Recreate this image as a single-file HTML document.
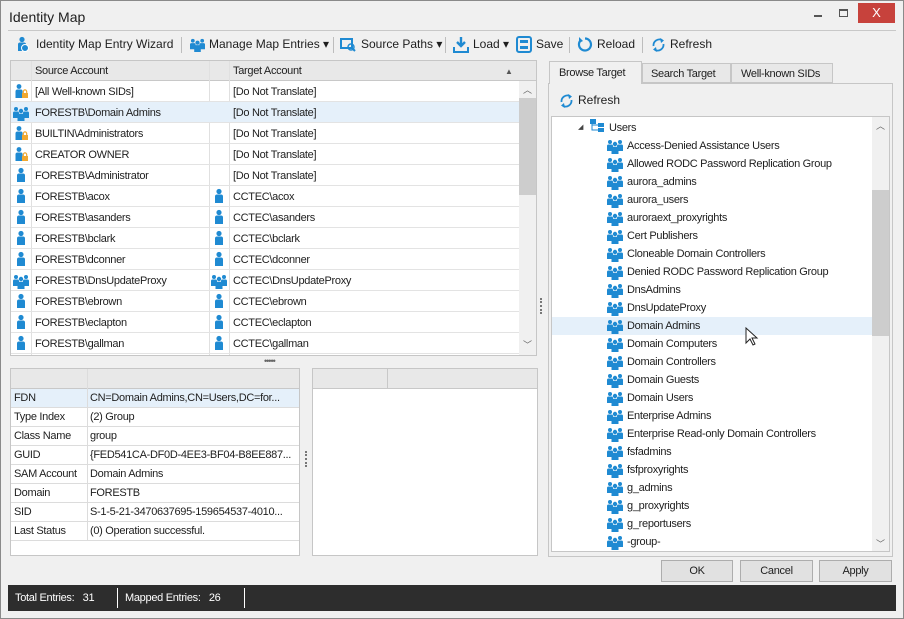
<!DOCTYPE html>
<html><head><meta charset="utf-8"><style>
*{box-sizing:border-box;margin:0;padding:0}
body{width:904px;height:619px;overflow:hidden;background:#fff;font-family:"Liberation Sans",sans-serif;font-size:12px;color:#1e1e1e;position:relative}
.a{position:absolute}
.win{left:0;top:0;width:904px;height:619px;background:#f0f0f0;border:1px solid #8a8a8a}
.t{white-space:nowrap;line-height:14px}
.sm{font-size:11px;letter-spacing:-0.3px}
.row{position:absolute;height:21px;border-bottom:1px solid #e3e3e3;width:508px;left:0}
.hl{background:#e5f0fa}
svg.i{position:absolute}
.tb{position:absolute;top:35px;height:18px;line-height:18px;white-space:nowrap}
.sep{position:absolute;top:37px;width:1px;height:16px;background:#bdbdbd}
.pr{position:absolute;left:0;width:288px;height:19px;border-bottom:1px solid #dcdcdc;line-height:18px;white-space:nowrap;overflow:hidden}
.pr span{position:absolute;left:3px}
.pr b{font-weight:normal;position:absolute;left:79px}
.tr{position:absolute;left:54px;height:18px;line-height:18px;white-space:nowrap}
.btn{position:absolute;top:560px;height:22px;border:1px solid #adadad;background:#e1e1e1;text-align:center;line-height:20px}
</style></head><body>
<svg width="0" height="0" style="position:absolute">
<defs>
<symbol id="p" viewBox="0 0 16 16"><circle cx="8" cy="3.5" r="2.6" fill="#1f8ad2"/><path d="M4 15V8.5Q4 6.5 6 6.5H10Q12 6.5 12 8.5V15Z" fill="#1f8ad2"/></symbol>
<symbol id="pl" viewBox="0 0 16 16"><circle cx="6" cy="3.5" r="2.4" fill="#1f8ad2"/><path d="M2.5 15V8.5Q2.5 6.5 4.5 6.5H8Q9.5 6.5 9.5 8V15Z" fill="#1f8ad2"/><rect x="9" y="10" width="6" height="5" fill="#f0a830"/><path d="M10.3 10V8.6A1.7 1.7 0 0 1 13.7 8.6V10" stroke="#f0a830" stroke-width="1.2" fill="none"/></symbol>
<symbol id="g" viewBox="0 0 18 16"><circle cx="4" cy="4" r="2" fill="#1f8ad2"/><circle cx="14" cy="4" r="2" fill="#1f8ad2"/><path d="M1 13V8Q1 6.5 2.5 6.5H5.5Q7 6.5 7 8V13ZM11 13V8Q11 6.5 12.5 6.5H15.5Q17 6.5 17 8V13Z" fill="#1f8ad2"/><circle cx="9" cy="6" r="2.2" fill="#1f8ad2"/><path d="M5.5 16V10.5Q5.5 8.7 7.3 8.7H10.7Q12.5 8.7 12.5 10.5V16Z" fill="#1f8ad2"/></symbol>
</defs></svg>
<div class="a win"></div>
<div class="a t" style="left:9px;top:8px;font-size:14px;line-height:18px">Identity Map</div>
<div class="a" style="left:814px;top:15px;width:8px;height:2px;background:#555"></div>
<div class="a" style="left:839px;top:9px;width:9px;height:8px;border:1px solid #555;border-top-width:2px"></div>
<div class="a" style="left:858px;top:3px;width:37px;height:20px;background:#c7423c;color:#fff;text-align:center;line-height:20px;font-size:13px">X</div>
<div class="a" style="left:8px;top:30px;width:888px;height:1px;background:#c8c8c8"></div>
<!-- toolbar -->
<svg class="i" style="left:14px;top:35px" width="16" height="18"><use href="#p"/><circle cx="11" cy="13" r="3.5" fill="#1f8ad2" stroke="#fff"/></svg>
<div class="tb" style="left:36px">Identity Map Entry Wizard</div>
<div class="sep" style="left:181px"></div>
<svg class="i" style="left:189px;top:37px" width="17" height="15"><use href="#g"/></svg>
<div class="tb" style="left:209px">Manage Map Entries ▾</div>
<div class="sep" style="left:333px"></div>
<svg class="i" style="left:340px;top:37px" width="16" height="15"><rect x="1" y="2" width="11" height="9" fill="none" stroke="#1f8ad2" stroke-width="2"/><circle cx="11" cy="10" r="3" fill="none" stroke="#1f8ad2" stroke-width="1.5"/><path d="M13 12L15 14" stroke="#1f8ad2" stroke-width="2"/></svg>
<div class="tb" style="left:361px">Source Paths ▾</div>
<div class="sep" style="left:445px"></div>
<svg class="i" style="left:453px;top:36px" width="16" height="17"><path d="M8 1V10M4 6L8 10L12 6" stroke="#1f8ad2" stroke-width="2.4" fill="none"/><path d="M1 11V16H15V11" stroke="#1f8ad2" stroke-width="2" fill="none"/></svg>
<div class="tb" style="left:473px">Load ▾</div>
<svg class="i" style="left:516px;top:36px" width="16" height="17"><rect x="1" y="1" width="14" height="15" rx="2" fill="none" stroke="#1f8ad2" stroke-width="2"/><rect x="4" y="4" width="8" height="3" fill="#1f8ad2"/><rect x="4" y="10" width="8" height="3" fill="#1f8ad2"/></svg>
<div class="tb" style="left:536px">Save</div>
<div class="sep" style="left:569px"></div>
<svg class="i" style="left:577px;top:36px" width="16" height="17"><path d="M4 4A6 6 0 1 0 8 2.5" stroke="#1f8ad2" stroke-width="2.2" fill="none"/><path d="M2 1L6 5L2 7Z" fill="#1f8ad2"/></svg>
<div class="tb" style="left:597px">Reload</div>
<div class="sep" style="left:642px"></div>
<svg class="i" style="left:651px;top:36px" width="15" height="17"><path d="M11 4A6 6 0 0 0 2.5 10M4 14A6 6 0 0 0 12.5 8" stroke="#1f8ad2" stroke-width="1.8" fill="none"/><path d="M9 2L13 4.5L10 7Z M6 16L2 13.5L5 11Z" fill="#1f8ad2"/></svg>
<div class="tb" style="left:670px">Refresh</div>

<!-- main grid -->
<div class="a sm" style="left:10px;top:60px;width:527px;height:296px;border:1px solid #c6c6c6;background:#fff;overflow:hidden">
 <div class="a" style="left:0;top:0;width:525px;height:20px;background:#e8e8e8;border-bottom:1px solid #c8c8c8"></div>
 <div class="a" style="left:20px;top:0;width:1px;height:296px;background:#e0e0e0"></div>
 <div class="a" style="left:198px;top:0;width:1px;height:296px;background:#e0e0e0"></div>
 <div class="a" style="left:218px;top:0;width:1px;height:296px;background:#e0e0e0"></div>
 <div class="a t" style="left:24px;top:3px">Source Account</div>
 <div class="a t" style="left:222px;top:3px">Target Account</div>
 <div class="a" style="left:494px;top:6px;font-size:8px;color:#555">▲</div>
 <div class="a" style="left:508px;top:20px;width:17px;height:276px;background:#f0f0f0"></div>
 <div class="a" style="left:508px;top:37px;width:17px;height:97px;background:#cdcdcd"></div>
 <div class="a" style="left:512px;top:22px;font-size:9px;color:#666">︿</div>
 <div class="a" style="left:512px;top:277px;font-size:9px;color:#666">﹀</div>
 <div class="a" style="left:0;top:20px;width:508px;height:276px">
  <div class="row" style="top:0"><svg class="i" style="left:2px;top:2px" width="16" height="16"><use href="#pl"/></svg><span class="a t" style="left:24px;top:4px">[All Well-known SIDs]</span><span class="a t" style="left:222px;top:4px">[Do Not Translate]</span></div>
  <div class="row hl" style="top:21px"><svg class="i" style="left:1px;top:3px" width="18" height="16"><use href="#g"/></svg><span class="a t" style="left:24px;top:4px">FORESTB\Domain Admins</span><span class="a t" style="left:222px;top:4px">[Do Not Translate]</span></div>
  <div class="row" style="top:42px"><svg class="i" style="left:2px;top:2px" width="16" height="16"><use href="#pl"/></svg><span class="a t" style="left:24px;top:4px">BUILTIN\Administrators</span><span class="a t" style="left:222px;top:4px">[Do Not Translate]</span></div>
  <div class="row" style="top:63px"><svg class="i" style="left:2px;top:2px" width="16" height="16"><use href="#pl"/></svg><span class="a t" style="left:24px;top:4px">CREATOR OWNER</span><span class="a t" style="left:222px;top:4px">[Do Not Translate]</span></div>
  <div class="row" style="top:84px"><svg class="i" style="left:2px;top:2px" width="16" height="16"><use href="#p"/></svg><span class="a t" style="left:24px;top:4px">FORESTB\Administrator</span><span class="a t" style="left:222px;top:4px">[Do Not Translate]</span></div>
  <div class="row" style="top:105px"><svg class="i" style="left:2px;top:2px" width="16" height="16"><use href="#p"/></svg><span class="a t" style="left:24px;top:4px">FORESTB\acox</span><svg class="i" style="left:200px;top:2px" width="16" height="16"><use href="#p"/></svg><span class="a t" style="left:222px;top:4px">CCTEC\acox</span></div>
  <div class="row" style="top:126px"><svg class="i" style="left:2px;top:2px" width="16" height="16"><use href="#p"/></svg><span class="a t" style="left:24px;top:4px">FORESTB\asanders</span><svg class="i" style="left:200px;top:2px" width="16" height="16"><use href="#p"/></svg><span class="a t" style="left:222px;top:4px">CCTEC\asanders</span></div>
  <div class="row" style="top:147px"><svg class="i" style="left:2px;top:2px" width="16" height="16"><use href="#p"/></svg><span class="a t" style="left:24px;top:4px">FORESTB\bclark</span><svg class="i" style="left:200px;top:2px" width="16" height="16"><use href="#p"/></svg><span class="a t" style="left:222px;top:4px">CCTEC\bclark</span></div>
  <div class="row" style="top:168px"><svg class="i" style="left:2px;top:2px" width="16" height="16"><use href="#p"/></svg><span class="a t" style="left:24px;top:4px">FORESTB\dconner</span><svg class="i" style="left:200px;top:2px" width="16" height="16"><use href="#p"/></svg><span class="a t" style="left:222px;top:4px">CCTEC\dconner</span></div>
  <div class="row" style="top:189px"><svg class="i" style="left:1px;top:3px" width="18" height="16"><use href="#g"/></svg><span class="a t" style="left:24px;top:4px">FORESTB\DnsUpdateProxy</span><svg class="i" style="left:199px;top:3px" width="18" height="16"><use href="#g"/></svg><span class="a t" style="left:222px;top:4px">CCTEC\DnsUpdateProxy</span></div>
  <div class="row" style="top:210px"><svg class="i" style="left:2px;top:2px" width="16" height="16"><use href="#p"/></svg><span class="a t" style="left:24px;top:4px">FORESTB\ebrown</span><svg class="i" style="left:200px;top:2px" width="16" height="16"><use href="#p"/></svg><span class="a t" style="left:222px;top:4px">CCTEC\ebrown</span></div>
  <div class="row" style="top:231px"><svg class="i" style="left:2px;top:2px" width="16" height="16"><use href="#p"/></svg><span class="a t" style="left:24px;top:4px">FORESTB\eclapton</span><svg class="i" style="left:200px;top:2px" width="16" height="16"><use href="#p"/></svg><span class="a t" style="left:222px;top:4px">CCTEC\eclapton</span></div>
  <div class="row" style="top:252px"><svg class="i" style="left:2px;top:2px" width="16" height="16"><use href="#p"/></svg><span class="a t" style="left:24px;top:4px">FORESTB\gallman</span><svg class="i" style="left:200px;top:2px" width="16" height="16"><use href="#p"/></svg><span class="a t" style="left:222px;top:4px">CCTEC\gallman</span></div>
 </div>
</div>
<div class="a" style="left:264px;top:356px;font-size:9px;color:#666;letter-spacing:-1px">•••••</div>

<!-- property grid -->
<div class="a sm" style="left:10px;top:368px;width:290px;height:188px;border:1px solid #c6c6c6;background:#fff">
 <div class="a" style="left:0;top:0;width:288px;height:20px;background:#e8e8e8;border-bottom:1px solid #c8c8c8"></div>
 <div class="a" style="left:76px;top:0;width:1px;height:172px;background:#dcdcdc;z-index:2"></div>
 <div class="a" style="left:0;top:20px;width:288px">
  <div class="pr hl" style="top:0"><span>FDN</span><b>CN=Domain Admins,CN=Users,DC=for...</b></div>
  <div class="pr" style="top:19px"><span>Type Index</span><b>(2) Group</b></div>
  <div class="pr" style="top:38px"><span>Class Name</span><b>group</b></div>
  <div class="pr" style="top:57px"><span>GUID</span><b>{FED541CA-DF0D-4EE3-BF04-B8EE887...</b></div>
  <div class="pr" style="top:76px"><span>SAM Account</span><b>Domain Admins</b></div>
  <div class="pr" style="top:95px"><span>Domain</span><b>FORESTB</b></div>
  <div class="pr" style="top:114px"><span>SID</span><b>S-1-5-21-3470637695-159654537-4010...</b></div>
  <div class="pr" style="top:133px"><span>Last Status</span><b>(0) Operation successful.</b></div>
 </div>
</div>
<div class="a" style="left:305px;top:451px;width:2px;height:16px;border-left:2px dotted #777"></div>
<div class="a" style="left:312px;top:368px;width:226px;height:188px;border:1px solid #c6c6c6;background:#fff">
 <div class="a" style="left:0;top:0;width:224px;height:20px;background:#e8e8e8;border-bottom:1px solid #c8c8c8"></div>
 <div class="a" style="left:74px;top:0;width:1px;height:20px;background:#c8c8c8"></div>
</div>
<div class="a" style="left:540px;top:298px;width:2px;height:16px;border-left:2px dotted #777"></div>

<!-- right tabs -->
<div class="a" style="left:548px;top:83px;width:345px;height:474px;border:1px solid #c6c6c6;background:#f0f0f0"></div>
<div class="a t sm" style="left:549px;top:61px;width:93px;height:23px;border:1px solid #c6c6c6;border-bottom:none;background:#f0f0f0;padding:4px 0 0 9px">Browse Target</div>
<div class="a t sm" style="left:642px;top:63px;width:89px;height:20px;border:1px solid #c6c6c6;background:#e8e8e8;padding:3px 0 0 8px">Search Target</div>
<div class="a t sm" style="left:731px;top:63px;width:102px;height:20px;border:1px solid #c6c6c6;background:#e8e8e8;padding:3px 0 0 9px">Well-known SIDs</div>
<svg class="i" style="left:559px;top:92px" width="15" height="17"><path d="M11 4A6 6 0 0 0 2.5 10M4 14A6 6 0 0 0 12.5 8" stroke="#1f8ad2" stroke-width="1.8" fill="none"/><path d="M9 2L13 4.5L10 7Z M6 16L2 13.5L5 11Z" fill="#1f8ad2"/></svg>
<div class="a t" style="left:578px;top:93px">Refresh</div>
<div class="a sm" style="left:551px;top:116px;width:339px;height:436px;border:1px solid #c6c6c6;background:#fff;overflow:hidden">
 <div class="a" style="left:320px;top:0;width:17px;height:434px;background:#f0f0f0"></div>
 <div class="a" style="left:320px;top:73px;width:17px;height:146px;background:#cdcdcd"></div>
 <div class="a" style="left:324px;top:2px;font-size:9px;color:#666">︿</div>
 <div class="a" style="left:324px;top:420px;font-size:9px;color:#666">﹀</div>
 <div class="a" style="left:0;top:200px;width:320px;height:18px;background:#e5f0fa"></div>
 <div class="a" style="left:26px;top:6px;font-size:7px;color:#444">◢</div>
 <svg class="i" style="left:37px;top:2px" width="16" height="14"><rect x="1" y="0" width="6" height="5" fill="#1f8ad2"/><rect x="9" y="4" width="6" height="4" fill="#1f8ad2"/><rect x="9" y="9" width="6" height="4" fill="#1f8ad2"/><path d="M3 5V11H9M3 6H9" stroke="#1f8ad2" fill="none"/></svg>
 <div class="tr" style="left:57px;top:2px">Users</div>
 <div class="a" style="left:54px;top:20px;width:260px">
  <div class="tr" style="left:0;top:0"><svg class="i" style="left:0;top:1px" width="18" height="16"><use href="#g"/></svg><span style="margin-left:21px">Access-Denied Assistance Users</span></div>
  <div class="tr" style="left:0;top:18px"><svg class="i" style="left:0;top:1px" width="18" height="16"><use href="#g"/></svg><span style="margin-left:21px">Allowed RODC Password Replication Group</span></div>
  <div class="tr" style="left:0;top:36px"><svg class="i" style="left:0;top:1px" width="18" height="16"><use href="#g"/></svg><span style="margin-left:21px">aurora_admins</span></div>
  <div class="tr" style="left:0;top:54px"><svg class="i" style="left:0;top:1px" width="18" height="16"><use href="#g"/></svg><span style="margin-left:21px">aurora_users</span></div>
  <div class="tr" style="left:0;top:72px"><svg class="i" style="left:0;top:1px" width="18" height="16"><use href="#g"/></svg><span style="margin-left:21px">auroraext_proxyrights</span></div>
  <div class="tr" style="left:0;top:90px"><svg class="i" style="left:0;top:1px" width="18" height="16"><use href="#g"/></svg><span style="margin-left:21px">Cert Publishers</span></div>
  <div class="tr" style="left:0;top:108px"><svg class="i" style="left:0;top:1px" width="18" height="16"><use href="#g"/></svg><span style="margin-left:21px">Cloneable Domain Controllers</span></div>
  <div class="tr" style="left:0;top:126px"><svg class="i" style="left:0;top:1px" width="18" height="16"><use href="#g"/></svg><span style="margin-left:21px">Denied RODC Password Replication Group</span></div>
  <div class="tr" style="left:0;top:144px"><svg class="i" style="left:0;top:1px" width="18" height="16"><use href="#g"/></svg><span style="margin-left:21px">DnsAdmins</span></div>
  <div class="tr" style="left:0;top:162px"><svg class="i" style="left:0;top:1px" width="18" height="16"><use href="#g"/></svg><span style="margin-left:21px">DnsUpdateProxy</span></div>
  <div class="tr" style="left:0;top:180px"><svg class="i" style="left:0;top:1px" width="18" height="16"><use href="#g"/></svg><span style="margin-left:21px">Domain Admins</span></div>
  <div class="tr" style="left:0;top:198px"><svg class="i" style="left:0;top:1px" width="18" height="16"><use href="#g"/></svg><span style="margin-left:21px">Domain Computers</span></div>
  <div class="tr" style="left:0;top:216px"><svg class="i" style="left:0;top:1px" width="18" height="16"><use href="#g"/></svg><span style="margin-left:21px">Domain Controllers</span></div>
  <div class="tr" style="left:0;top:234px"><svg class="i" style="left:0;top:1px" width="18" height="16"><use href="#g"/></svg><span style="margin-left:21px">Domain Guests</span></div>
  <div class="tr" style="left:0;top:252px"><svg class="i" style="left:0;top:1px" width="18" height="16"><use href="#g"/></svg><span style="margin-left:21px">Domain Users</span></div>
  <div class="tr" style="left:0;top:270px"><svg class="i" style="left:0;top:1px" width="18" height="16"><use href="#g"/></svg><span style="margin-left:21px">Enterprise Admins</span></div>
  <div class="tr" style="left:0;top:288px"><svg class="i" style="left:0;top:1px" width="18" height="16"><use href="#g"/></svg><span style="margin-left:21px">Enterprise Read-only Domain Controllers</span></div>
  <div class="tr" style="left:0;top:306px"><svg class="i" style="left:0;top:1px" width="18" height="16"><use href="#g"/></svg><span style="margin-left:21px">fsfadmins</span></div>
  <div class="tr" style="left:0;top:324px"><svg class="i" style="left:0;top:1px" width="18" height="16"><use href="#g"/></svg><span style="margin-left:21px">fsfproxyrights</span></div>
  <div class="tr" style="left:0;top:342px"><svg class="i" style="left:0;top:1px" width="18" height="16"><use href="#g"/></svg><span style="margin-left:21px">g_admins</span></div>
  <div class="tr" style="left:0;top:360px"><svg class="i" style="left:0;top:1px" width="18" height="16"><use href="#g"/></svg><span style="margin-left:21px">g_proxyrights</span></div>
  <div class="tr" style="left:0;top:378px"><svg class="i" style="left:0;top:1px" width="18" height="16"><use href="#g"/></svg><span style="margin-left:21px">g_reportusers</span></div>
  <div class="tr" style="left:0;top:396px"><svg class="i" style="left:0;top:1px" width="18" height="16"><use href="#g"/></svg><span style="margin-left:21px">-group-</span></div>
 </div>
 <svg class="i" style="left:193px;top:210px" width="14" height="20"><path d="M1 1V16L5 12L8 18L10 17L7 11H12Z" fill="#fff" stroke="#222"/></svg>
</div>

<div class="btn sm" style="left:661px;width:72px">OK</div>
<div class="btn sm" style="left:740px;width:73px">Cancel</div>
<div class="btn sm" style="left:819px;width:73px">Apply</div>

<div class="a sm" style="left:8px;top:585px;width:888px;height:26px;background:#2d2d2d;color:#fff">
 <span class="a t" style="left:7px;top:6px">Total Entries:&nbsp;&nbsp;&nbsp;31</span>
 <div class="a" style="left:109px;top:3px;width:1px;height:20px;background:#fff"></div>
 <span class="a t" style="left:117px;top:6px">Mapped Entries:&nbsp;&nbsp;&nbsp;26</span>
 <div class="a" style="left:236px;top:3px;width:1px;height:20px;background:#fff"></div>
</div>
</body></html>
